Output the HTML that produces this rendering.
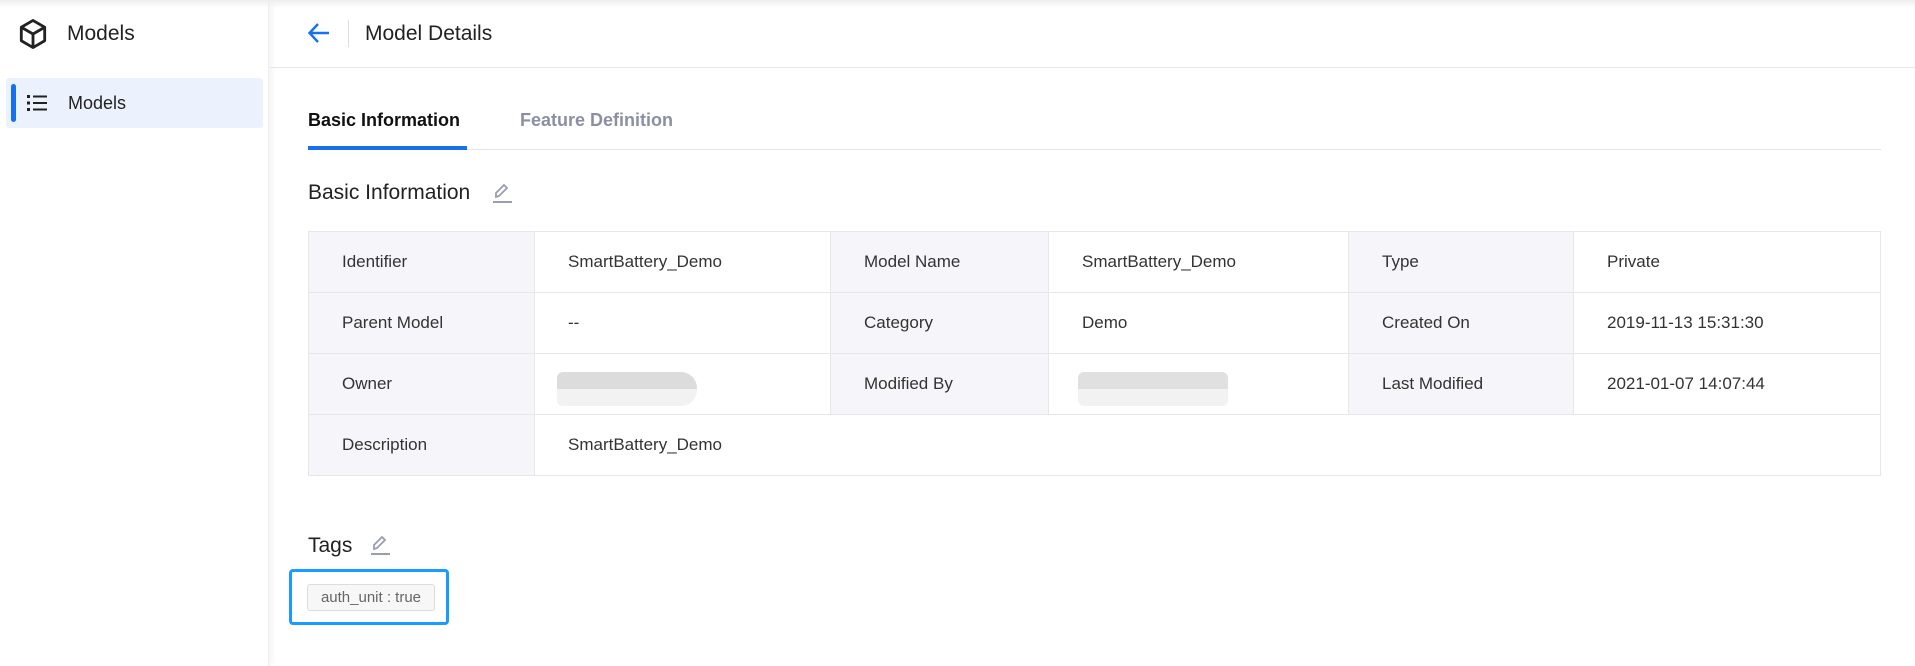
<!DOCTYPE html>
<html><head><meta charset="utf-8"><style>
*{margin:0;padding:0;box-sizing:border-box}
body{width:1915px;height:666px;overflow:hidden;background:#fff;font-family:"Liberation Sans",Arial,sans-serif;color:#222;position:relative}
.side{position:absolute;left:0;top:0;width:269px;height:666px;background:#fff;box-shadow:2px 0 6px rgba(0,0,0,.06);border-right:1px solid #eee}
.top{position:absolute;left:0;top:0;width:1915px;height:8px;background:linear-gradient(#eee,rgba(255,255,255,0))}
.a{position:absolute}
table{position:absolute;left:308px;top:231px;width:1573px;border-collapse:collapse;font-size:17px;color:#333}
td{border:1px solid #e6e6eb;height:61px;padding-left:33px}
td.l{background:#f6f6fa}
</style></head><body>
<div class="side">
 <svg class="a" style="left:18px;top:18px" width="30" height="32" viewBox="0 0 24 26"><path d="M12 2 L21.5 7.5 V18.5 L12 24 L2.5 18.5 V7.5 Z M2.5 7.5 L12 13 L21.5 7.5 M12 13 V24" fill="none" stroke="#222" stroke-width="2.3" stroke-linejoin="round"/></svg>
 <div class="a" style="left:67px;top:22px;font-size:21px">Models</div>
 <div class="a" style="left:6px;top:78px;width:257px;height:50px;background:#ebf2fd;border-radius:3px"></div>
 <div class="a" style="left:11px;top:84px;width:5px;height:38px;background:#1670f0;border-radius:3px"></div>
 <svg class="a" style="left:27px;top:94px" width="20" height="18" viewBox="0 0 20 18"><g fill="#222"><rect x="0" y="1" width="3" height="3"/><rect x="0" y="7.5" width="3" height="3"/><rect x="0" y="14" width="3" height="3"/><rect x="6" y="1.5" width="14" height="2"/><rect x="6" y="8" width="14" height="2"/><rect x="6" y="14.5" width="14" height="2"/></g></svg>
 <div class="a" style="left:68px;top:93px;font-size:18px">Models</div>
</div>
<div class="top"></div>
<div class="a" style="left:270px;top:67px;width:1645px;height:1px;background:#e8e8ec"></div>
<svg class="a" style="left:307px;top:22px" width="24" height="22" viewBox="0 0 24 22"><path d="M22 11 H3 M11 2 L2.5 11 L11 20" fill="none" stroke="#1670f0" stroke-width="2.4"/></svg>
<div class="a" style="left:348px;top:20px;width:1px;height:27px;background:#ddd"></div>
<div class="a" style="left:365px;top:22px;font-size:21px;color:#222">Model Details</div>
<div class="a" style="left:308px;top:110px;font-size:18px;font-weight:bold;color:#111">Basic Information</div>
<div class="a" style="left:520px;top:110px;font-size:18px;font-weight:bold;color:#8b8fa3">Feature Definition</div>
<div class="a" style="left:308px;top:149px;width:1573px;height:1px;background:#e6e6ea"></div>
<div class="a" style="left:308px;top:146px;width:159px;height:4px;background:#1670f0"></div>
<div class="a" style="left:308px;top:181px;font-size:21px;color:#222">Basic Information</div>
<svg class="a" style="left:491px;top:182px" width="22" height="22" viewBox="0 0 22 22"><path d="M5 15 L5 11 L13 3 L16 6 L8 14 Z" fill="none" stroke="#9a9cb0" stroke-width="1.8"/><rect x="2" y="19" width="19" height="2" fill="#9a9cb0"/></svg>
<table>
<colgroup><col style="width:226px"><col style="width:296px"><col style="width:218px"><col style="width:300px"><col style="width:225px"><col></colgroup>
<tr><td class="l">Identifier</td><td>SmartBattery_Demo</td><td class="l">Model Name</td><td>SmartBattery_Demo</td><td class="l">Type</td><td>Private</td></tr>
<tr><td class="l">Parent Model</td><td>--</td><td class="l">Category</td><td>Demo</td><td class="l">Created On</td><td>2019-11-13 15:31:30</td></tr>
<tr><td class="l">Owner</td><td></td><td class="l">Modified By</td><td></td><td class="l">Last Modified</td><td>2021-01-07 14:07:44</td></tr>
<tr><td class="l">Description</td><td colspan="5">SmartBattery_Demo</td></tr>
</table>
<div class="a" style="left:557px;top:372px;width:140px;height:34px;border-radius:6px 16px 16px 6px;background:linear-gradient(#dcdcdc 0 50%,#f2f2f2 50%)"></div>
<div class="a" style="left:1078px;top:372px;width:150px;height:34px;border-radius:6px;background:linear-gradient(#e0e0e0 0 50%,#f2f2f2 50%)"></div>
<div class="a" style="left:308px;top:534px;font-size:21px;color:#222">Tags</div>
<svg class="a" style="left:369px;top:534px" width="22" height="22" viewBox="0 0 22 22"><path d="M5 15 L5 11 L13 3 L16 6 L8 14 Z" fill="none" stroke="#9a9cb0" stroke-width="1.8"/><rect x="2" y="19" width="19" height="2" fill="#9a9cb0"/></svg>
<div class="a" style="left:289px;top:569px;width:160px;height:56px;border:3px solid #1a9bff;border-radius:4px"></div>
<div class="a" style="left:307px;top:584px;width:128px;height:27px;border:1px solid #ddd;border-radius:3px;background:#f7f7f7;font-size:15px;color:#666;line-height:25px;text-align:center">auth_unit : true</div>
</body></html>
